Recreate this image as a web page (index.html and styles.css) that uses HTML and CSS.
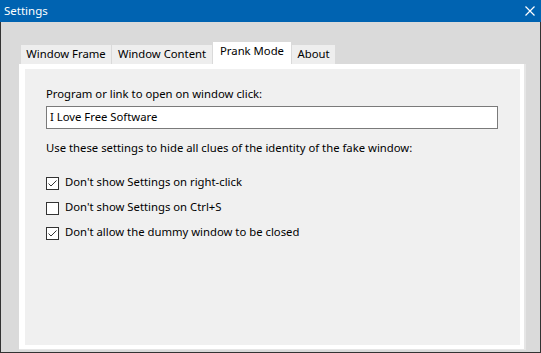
FILE: index.html
```html
<!DOCTYPE html>
<html lang="en">
<head>
<meta charset="utf-8">
<title>Settings</title>
<link rel="stylesheet" href="styles.css">
</head>
<body>
<div class="window">
  <div class="titlebar">
    <span class="title">Settings</span>
    <svg class="close" width="10" height="10" viewBox="0 0 10 10"><path d="M0.5 0.5L9.5 9.5M9.5 0.5L0.5 9.5" stroke="#fff" stroke-width="1.2" fill="none"/></svg>
  </div>
  <div class="client">
    <div class="tabs">
      <div class="tab tab-frame">Window Frame</div>
      <div class="tab tab-content">Window Content</div>
      <div class="tab tab-prank selected">Prank Mode</div>
      <div class="tab tab-about">About</div>
    </div>
    <div class="panel">
      <div class="page">
        <div class="label">Program or link to open on window click:</div>
        <div class="textbox">I Love Free Software</div>
        <div class="hint">Use these settings to hide all clues of the identity of the fake window:</div>
        <div class="check">
          <svg class="box" width="13" height="13" viewBox="0 0 13 13"><rect x="0.5" y="0.5" width="12" height="12" fill="#fff" stroke="#333"/><polyline points="2.5,6.5 5,9 10.5,3.5" fill="none" stroke="#333" stroke-width="1"/></svg>
          <span>Don't show Settings on right-click</span>
        </div>
        <div class="check">
          <svg class="box" width="13" height="13" viewBox="0 0 13 13"><rect x="0.5" y="0.5" width="12" height="12" fill="#fff" stroke="#333"/></svg>
          <span>Don't show Settings on Ctrl+S</span>
        </div>
        <div class="check">
          <svg class="box" width="13" height="13" viewBox="0 0 13 13"><rect x="0.5" y="0.5" width="12" height="12" fill="#fff" stroke="#333"/><polyline points="2.5,6.5 5,9 10.5,3.5" fill="none" stroke="#333" stroke-width="1"/></svg>
          <span>Don't allow the dummy window to be closed</span>
        </div>
      </div>
    </div>
  </div>
</div>
</body>
</html>
```

FILE: styles.css
```css
* { box-sizing: border-box; }
html, body { margin: 0; padding: 0; }
body {
  font-family: "Noto Sans", "Open Sans", sans-serif;
  font-size: 11.3px;
  line-height: 16px;
  color: #000;
  background: #dadada;
}
.window {
  width: 541px;
  height: 353px;
  display: flex;
  flex-direction: column;
}
.titlebar {
  height: 22px;
  flex: none;
  background: #0063b1;
  color: #fff;
  display: flex;
  align-items: center;
  justify-content: space-between;
  padding: 0 6px 0 4px;
  line-height: 22px;
  font-size: 11.5px;
}
.close { display: block; margin-top: -1px; }
.client {
  flex: 1;
  display: flex;
  flex-direction: column;
  background: #dadada;
  border: 1px solid #333;
  border-top: 0;
  padding: 20px 14px 2px 18px;
}
.tabs {
  display: flex;
  align-items: flex-end;
  height: 22px;
  padding-left: 2px;
  flex: none;
}
.tab {
  height: 19px;
  background: #eeeeee;
  margin-right: 1px;
  text-align: center;
  padding-top: 1px;
  white-space: nowrap;
}
.tab-frame { width: 90px; }
.tab-content { width: 100px; }
.tab-prank { width: 78px; }
.tab-about { width: 43px; }
.tab.selected {
  height: 22px;
  background: #fff;
  padding-top: 1px;
}
.panel {
  flex: 1;
  border-right: 2px solid #e6e6e6;
  border-bottom: 1px solid #e6e6e6;
  display: flex;
}
.page {
  flex: 1;
  background: #f0f0f0;
  border-style: solid;
  border-color: #fff;
  border-width: 5px 4px 4px 6px;
  padding: 17px 0 0 21px;
}
.label { height: 16px; }
.textbox {
  margin-top: 4px;
  width: 452px;
  height: 23px;
  background: #fff;
  border: 1px solid #7a7a7a;
  padding: 2px 0 0 3px;
}
.hint { margin-top: 11px; }
.check {
  display: flex;
  align-items: flex-start;
  height: 16px;
  margin-top: 9px;
}
.hint + .check { margin-top: 18px; }
.check .box { display: block; margin-top: 3px; margin-right: 6px; flex: none; }
```
